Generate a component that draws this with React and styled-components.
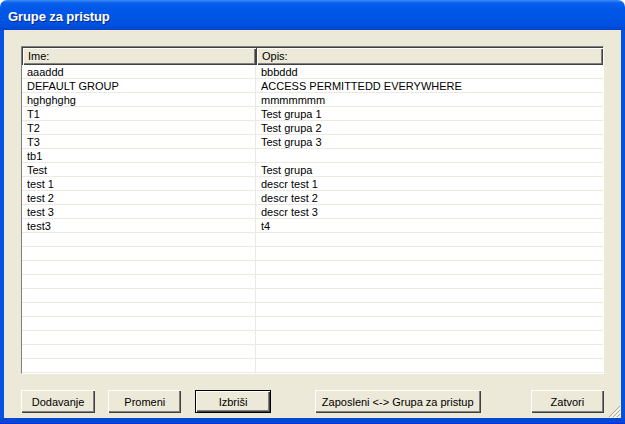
import React from "react";
import styled, { createGlobalStyle } from "styled-components";

const GlobalStyle = createGlobalStyle`
  *, *::before, *::after {
    box-sizing: border-box;
  }
  html, body {
    margin: 0;
    padding: 0;
    background: #ffffff;
  }
  body {
    font-family: "Liberation Sans", Arial, sans-serif;
  }
`;

const Window = styled.div`
  width: 625px;
  height: 424px;
  display: grid;
  grid-template-rows: 30px 388px 6px;
  overflow: hidden;
`;

const TitleBar = styled.div`
  display: flex;
  align-items: center;
  padding-left: 8px;
  padding-top: 2px;
  border-radius: 7px 7px 0 0;
  background: linear-gradient(
    to bottom,
    #3b8cf5 0%,
    #0a5fec 10%,
    #0058e8 30%,
    #0055e5 60%,
    #0050df 85%,
    #0344cc 100%
  );
`;

const Title = styled.span`
  color: #fff;
  font-family: "Liberation Sans", Arial, sans-serif;
  font-weight: bold;
  font-size: 13px;
  letter-spacing: -0.1px;
  text-shadow: 1px 1px 0 #0a2a8a;
`;

const Body = styled.div`
  position: relative;
  display: flex;
  flex-direction: column;
  overflow: hidden;
  background: #ece9d8;
  border-left: 4px solid #0553e0;
  border-right: 4px solid #0550dc;
  padding: 16px 17px 0 17px;
`;

const BottomEdge = styled.div`
  background: #0548d6;
  border-bottom: 1px solid #0831d9;
`;

const List = styled.div`
  height: 328px;
  flex: none;
  display: flex;
  flex-direction: column;
  background: #fff;
  border-top: 1px solid #808080;
  border-left: 1px solid #808080;
  border-right: 1px solid #ffffff;
  border-bottom: 1px solid #ffffff;
  overflow: hidden;
`;

const HeaderRow = styled.div`
  display: flex;
  height: 18px;
  flex: none;
`;

const HeaderCell = styled.div`
  width: ${({ w }) => (w ? `${w}px` : "auto")};
  flex: ${({ w }) => (w ? "none" : "1")};
  background: #ece9d8;
  box-shadow: inset 1px 1px 0 #ffffff, inset -1px -1px 0 #404040,
    inset -2px -2px 0 #808080;
  border-top: 1px solid #404040;
  border-left: 1px solid #404040;
  font-size: 11px;
  line-height: 16px;
  color: #000;
  padding-left: 5px;
`;

const Row = styled.div`
  display: flex;
  height: 14px;
  flex: none;
  border-bottom: 1px solid #ebe9e0;
`;

const Cell = styled.div`
  width: ${({ w }) => (w ? `${w}px` : "auto")};
  flex: ${({ w }) => (w ? "none" : "1")};
  border-right: ${({ w }) => (w ? "1px solid #ebe9e0" : "none")};
  font-size: 11px;
  line-height: 14px;
  color: #000;
  padding-left: 5px;
  white-space: nowrap;
  overflow: hidden;
`;

const ButtonRow = styled.div`
  display: flex;
  align-items: center;
  margin-top: 16px;
`;

const Button = styled.button`
  height: 23px;
  width: ${({ w }) => w}px;
  margin-left: ${({ ml }) => ml || 0}px;
  padding: 0;
  background: #ece9d8;
  font-family: "Liberation Sans", Arial, sans-serif;
  font-weight: normal;
  font-size: 11px;
  color: #000;
  border: ${({ primary }) => (primary ? "1px solid #000" : "none")};
  box-shadow: inset 1px 1px 0 #ffffff, inset -1px -1px 0 #404040,
    inset -2px -2px 0 #808080;
`;

const Grip = styled.svg`
  position: absolute;
  right: 0;
  bottom: 0;
`;

const rows = [
  ["aaaddd", "bbbddd"],
  ["DEFAULT GROUP", "ACCESS PERMITTEDD EVERYWHERE"],
  ["hghghghg", "mmmmmmm"],
  ["T1", "Test grupa 1"],
  ["T2", "Test grupa 2"],
  ["T3", "Test grupa 3"],
  ["tb1", ""],
  ["Test", "Test grupa"],
  ["test 1", "descr test 1"],
  ["test 2", "descr test 2"],
  ["test 3", "descr test 3"],
  ["test3", "t4"],
];

export default function App() {
  const filled = [...rows];
  while (filled.length < 23) filled.push(["", ""]);

  return (
    <>
      <GlobalStyle />
      <Window>
        <TitleBar>
          <Title>Grupe za pristup</Title>
        </TitleBar>
        <Body>
          <List>
            <HeaderRow>
              <HeaderCell w={234}>Ime:</HeaderCell>
              <HeaderCell>Opis:</HeaderCell>
            </HeaderRow>
            {filled.map((r, i) => (
              <Row key={i}>
                <Cell w={234}>{r[0]}</Cell>
                <Cell>{r[1]}</Cell>
              </Row>
            ))}
          </List>
          <ButtonRow>
            <Button w={75}>Dodavanje</Button>
            <Button w={74} ml={13}>Promeni</Button>
            <Button w={76} ml={14} primary>Izbriši</Button>
            <Button w={168} ml={44}>Zaposleni &lt;-&gt; Grupa za pristup</Button>
            <Button w={74} ml={50}>Zatvori</Button>
          </ButtonRow>
          <Grip width="13" height="13" viewBox="0 0 13 13">
            <g stroke="#aca899" strokeWidth="1">
              <line x1="12" y1="1" x2="1" y2="12" />
              <line x1="12" y1="5" x2="5" y2="12" />
              <line x1="12" y1="9" x2="9" y2="12" />
            </g>
            <g stroke="#ffffff" strokeWidth="1">
              <line x1="13" y1="2" x2="2" y2="13" />
              <line x1="13" y1="6" x2="6" y2="13" />
              <line x1="13" y1="10" x2="10" y2="13" />
            </g>
          </Grip>
        </Body>
        <BottomEdge />
      </Window>
    </>
  );
}
